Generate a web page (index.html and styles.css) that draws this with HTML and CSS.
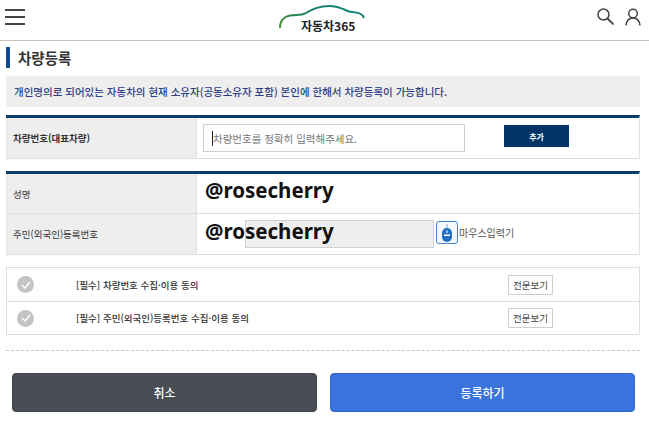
FILE: index.html
```html
<!DOCTYPE html>
<html lang="ko">
<head>
    <meta charset="UTF-8">
    <title>자동차365 차량등록</title>
    <link rel="stylesheet" href="styles.css">
</head>
<body>
    <header class="top">
        <div class="menu"><span></span><span></span><span></span></div>
        <div class="logo">
            <svg class="logo-car" width="90" height="26" viewBox="0 0 90 26">
                <defs>
                    <linearGradient id="car" x1="0" x2="1" y1="0" y2="0">
                        <stop offset="0" stop-color="#3f8a3c"/>
                        <stop offset="0.4" stop-color="#16806f"/>
                        <stop offset="1" stop-color="#17857a"/>
                    </linearGradient>
                </defs>
                <path d="M1 24C1 17 5 12.500 11 11.500C17 10.500 22 11.500 26 9.500C33 5 41 2 50 2C59 2 64 5 70 7.500C76 8.500 83 8 85 14" fill="none" stroke="url(#car)" stroke-width="2"/>
            </svg>
            <span class="logo-text">자동차365</span>
        </div>
        <div class="top-icons">
            <svg width="17" height="17" viewBox="0 0 17 17"><circle cx="6.500" cy="6.500" r="5.500" fill="none" stroke="#444" stroke-width="1.500"/><path d="M10.500 10.500l6 6" stroke="#444" stroke-width="1.800"/></svg>
            <svg width="16" height="18" viewBox="0 0 16 18"><circle cx="8" cy="5.500" r="4.300" fill="none" stroke="#444" stroke-width="1.500"/><path d="M1 17.500C1.500 12.500 4 10 8 10C12 10 14.500 12.500 15 17.500" fill="none" stroke="#444" stroke-width="1.500"/></svg>
        </div>
    </header>

    <main class="content">
        <h1 class="page-title">차량등록</h1>
        <p class="notice">개인명의로 되어있는 자동차의 현재 소유자(공동소유자 포함) 본인에 한해서 차량등록이 가능합니다.</p>

        <div class="form-table">
            <div class="form-row row-car">
                <div class="form-label strong">차량번호(대표차량)</div>
                <div class="form-value">
                    <div class="car-input"><i class="caret"></i>차량번호를 정확히 입력해주세요.</div>
                    <button class="btn-add">추가</button>
                </div>
            </div>
        </div>

        <div class="form-table">
            <div class="form-row row-name">
                <div class="form-label">성명</div>
                <div class="form-value big-text name-text">@rosecherry</div>
            </div>
            <div class="form-row row-id">
                <div class="form-label">주민(외국인)등록번호</div>
                <div class="form-value">
                    <div class="id-input"></div>
                    <div class="mouse-btn">
                        <svg width="10" height="18" viewBox="0 0 10 18"><path d="M5 0V5" stroke="#7fb2e0" stroke-width="1"/><path d="M0 9a5 5 0 0 1 10 0v4a5 5 0 0 1-10 0z" fill="#1f6fc4"/><path d="M2 10.500h6v1.500h-6z" fill="#fff"/><path d="M4.300 6.500h1.400v2.500h-1.400z" fill="#cfe2f5"/></svg>
                    </div>
                    <span class="mouse-label">마우스입력기</span>
                    <div class="big-text overlay">@rosecherry</div>
                </div>
            </div>
        </div>

        <div class="agree-box">
            <div class="agree-row">
                <span class="check"><svg width="10" height="8" viewBox="0 0 10 8"><path d="M1 4l3 3 5-6" fill="none" stroke="#fff" stroke-width="1.500"/></svg></span>
                <span class="agree-text">[필수] 차량번호 수집·이용 동의</span>
                <button class="btn-view">전문보기</button>
            </div>
            <div class="agree-row">
                <span class="check"><svg width="10" height="8" viewBox="0 0 10 8"><path d="M1 4l3 3 5-6" fill="none" stroke="#fff" stroke-width="1.500"/></svg></span>
                <span class="agree-text">[필수] 주민(외국인)등록번호 수집·이용 동의</span>
                <button class="btn-view">전문보기</button>
            </div>
        </div>

        <div class="actions">
            <button class="btn btn-cancel">취소</button>
            <button class="btn btn-submit">등록하기</button>
        </div>
    </main>
</body>
</html>
```

FILE: styles.css
```css
* {
    box-sizing: border-box;
}
body {
    margin: 0;
    background-color: white;
    color: #333;
    font-family: "Noto Sans CJK KR", "Noto Sans", sans-serif;
    font-size: 9.5px;
}
button {
    font-family: inherit;
    padding: 0;
}
.top {
    display: flex;
    justify-content: space-between;
    align-items: center;
    height: 41px;
    padding: 0 8px 7px 5px;
    border-bottom: 1px solid #c4c4c4;
    position: relative;
}
.menu {
    display: flex;
    flex-direction: column;
    gap: 5px;
    width: 20px;
}
.menu span {
    height: 2px;
    background-color: #444;
}
.logo {
    position: absolute;
    left: 279px;
    top: 4px;
    width: 90px;
    height: 30px;
}
.logo-car {
    display: block;
}
.logo-text {
    position: absolute;
    left: 22px;
    top: 14px;
    font-size: 12px;
    line-height: 16px;
    font-weight: 700;
    color: #222;
    white-space: nowrap;
}
.top-icons {
    display: flex;
    align-items: center;
    gap: 11px;
}
.content {
    padding: 6px 9px 0 6px;
}
.page-title {
    margin: 0;
    height: 21px;
    padding-left: 8px;
    border-left: 4px solid #0f4c8a;
    font-size: 14.500px;
    line-height: 21px;
    font-weight: 700;
    color: #333;
}
.notice {
    margin: 8px 0 8px;
    height: 31px;
    padding-left: 8px;
    background-color: #eeeeee;
    color: #2f3f86;
    font-size: 10.500px;
    font-weight: 500;
    line-height: 31px;
    white-space: nowrap;
}
.form-table {
    margin-bottom: 12px;
    border-top: 3px solid #0f3c6e;
    border-right: 1px solid #e2e2e2;
    border-bottom: 1px solid #dedede;
}
.form-row {
    display: flex;
}
.form-row + .form-row {
    border-top: 1px solid #dedede;
}
.row-car {
    height: 40px;
}
.row-name {
    height: 39px;
}
.row-id {
    height: 41px;
}
.form-label {
    display: flex;
    align-items: center;
    width: 191px;
    padding-left: 6px;
    background-color: #eeeeee;
    border-right: 1px solid #dedede;
    border-left: 1px solid #e6e6e6;
}
.form-label.strong {
    font-weight: 700;
}
.form-value {
    flex: 1;
    display: flex;
    align-items: center;
    position: relative;
}
.car-input {
    display: flex;
    align-items: center;
    width: 262px;
    height: 28px;
    margin-left: 6px;
    padding-left: 8px;
    border: 1px solid #cfcfcf;
    color: #777;
    font-size: 10.500px;
}
.caret {
    width: 1px;
    height: 15px;
    background-color: #222;
}
.btn-add {
    width: 65px;
    height: 22px;
    margin-left: 39px;
    margin-bottom: 4px;
    border: none;
    background-color: #023565;
    color: white;
    font-size: 8px;
    font-weight: 700;
}
.big-text {
    padding-left: 8px;
    color: #111;
    font-family: "Noto Sans", sans-serif;
    font-size: 20.500px;
    font-weight: 700;
}
.name-text {
    padding-bottom: 8px;
}
.id-input {
    width: 189px;
    height: 28px;
    margin-left: 48px;
    background-color: #eeeeee;
    border: 1px solid #d2d2d2;
}
.mouse-btn {
    display: flex;
    align-items: center;
    justify-content: center;
    width: 22px;
    height: 23px;
    margin-left: 2px;
    margin-bottom: 3px;
    border: 1px solid #3f88d0;
    border-radius: 3px;
    background-color: #f4f8fc;
}
.mouse-label {
    margin-bottom: 3px;
    margin-left: 1px;
    color: #555;
    font-size: 10px;
}
.overlay {
    position: absolute;
    left: 0;
    top: 3px;
}
.agree-box {
    margin-top: 7px;
    border: 1px solid #dedede;
}
.agree-row {
    display: flex;
    align-items: center;
    height: 33px;
    padding-left: 10px;
}
.agree-row + .agree-row {
    border-top: 1px solid #dedede;
}
.check {
    display: flex;
    align-items: center;
    justify-content: center;
    width: 17px;
    height: 17px;
    border-radius: 50%;
    background-color: #c4c4c4;
}
.agree-text {
    flex: 1;
    margin-left: 42px;
    font-weight: 500;
}
.btn-view {
    width: 45px;
    height: 20px;
    margin-right: 86px;
    border: 1px solid #cfcfcf;
    background-color: white;
    color: #444;
    font-size: 9.500px;
}
.actions {
    display: flex;
    justify-content: space-between;
    margin-top: 15px;
    padding: 22px 0 0 6px;
    border-top: 1px dashed #c4c4c4;
}
.btn {
    width: 305px;
    height: 39px;
    border-radius: 4px;
    color: white;
    font-size: 12px;
    font-weight: 500;
}
.btn-cancel {
    border: 1px solid #3f434a;
    background-color: #484c53;
}
.btn-submit {
    margin-right: 5px;
    border: 1px solid #2f66cc;
    background-color: #3a73dc;
}
```
